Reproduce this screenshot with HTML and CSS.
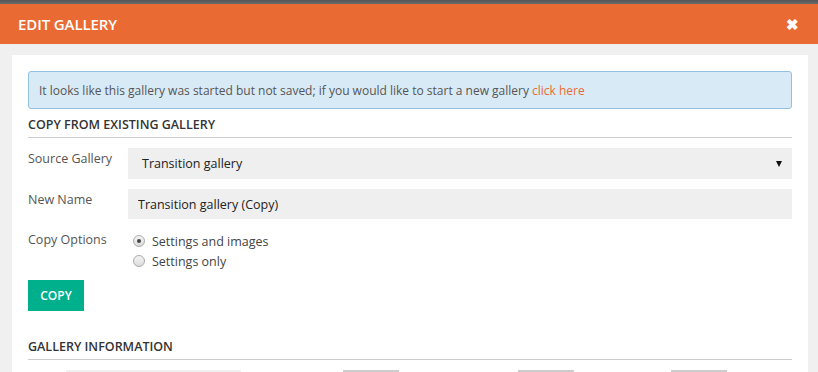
FILE: index.html
```html
<!DOCTYPE html>
<html>
<head>
    <title>Edit Gallery</title>
    <link rel="stylesheet" href="styles.css">
</head>
<body>
    <div class="top-strip"></div>
    <div class="modal-header">
        <h1 class="modal-title">EDIT GALLERY</h1>
        <span class="modal-close">&#10006;</span>
    </div>
    <div class="modal-body">
        <div class="panel">
            <div class="alert">
                It looks like this gallery was started but not saved; if you would like to start a new gallery <a href="#">click here</a>
            </div>

            <h2 class="section-title">COPY FROM EXISTING GALLERY</h2>

            <div class="form-row">
                <label class="form-label">Source Gallery</label>
                <div class="select-box">
                    <span>Transition gallery</span>
                    <span class="select-arrow"></span>
                </div>
            </div>
            <div class="form-row">
                <label class="form-label">New Name</label>
                <input class="text-input" type="text" value="Transition gallery (Copy)">
            </div>
            <div class="form-row">
                <label class="form-label">Copy Options</label>
                <div class="radio-list">
                    <label class="radio"><span class="radio-dot checked"></span>Settings and images</label>
                    <label class="radio"><span class="radio-dot"></span>Settings only</label>
                </div>
            </div>

            <button class="copy-button">COPY</button>

            <h2 class="section-title">GALLERY INFORMATION</h2>

            <div class="info-row">
                <div class="info-block wide"></div>
                <div class="info-block"></div>
                <div class="info-block"></div>
                <div class="info-block"></div>
            </div>
        </div>
    </div>
</body>
</html>
```

FILE: styles.css
```css
body {
    font-family: "Open Sans", Arial, sans-serif;
    margin: 0;
    height: 372px;
    overflow: hidden;
    background-color: #f0f0f0;
    color: #444;
}

.top-strip {
    height: 4px;
    background: linear-gradient(to bottom, #555, #6a6a6a);
}

.modal-header {
    height: 40px;
    background-color: #e96a33;
    display: flex;
    align-items: center;
    justify-content: space-between;
    padding: 0 19px 0 18px;
}

.modal-title {
    margin: 0;
    color: white;
    font-size: 15px;
    font-weight: 600;
    letter-spacing: -0.1px;
}

.modal-close {
    color: white;
    font-size: 15px;
    font-weight: bold;
}

.modal-body {
    padding: 11px 10px 0 12px;
}

.panel {
    background-color: white;
    padding: 16px 16px 40px 16px;
}

.alert {
    background-color: #d9eaf7;
    border: 1px solid #93c2e0;
    border-radius: 3px;
    box-sizing: border-box;
    height: 38px;
    padding: 0 10px;
    display: flex;
    align-items: center;
    font-size: 12px;
    color: #555;
}

.alert a {
    color: #e96a33;
    text-decoration: none;
    margin-left: 3px;
}

.section-title {
    margin: 0;
    font-size: 12.5px;
    font-weight: 600;
    color: #333;
    border-bottom: 1px solid #ccc;
    padding: 7px 0 4px 0;
}

.form-row {
    display: flex;
    margin-top: 10px;
}

.form-label {
    width: 100px;
    flex-shrink: 0;
    font-size: 12.5px;
    color: #555;
    padding-top: 2px;
}

.select-box {
    flex: 1;
    height: 31px;
    background-color: #efefef;
    display: flex;
    align-items: center;
    justify-content: space-between;
    padding: 0 10px 0 14px;
    font-size: 12.5px;
    color: #222;
}

.select-arrow {
    width: 0;
    height: 0;
    border-left: 3px solid transparent;
    border-right: 3px solid transparent;
    border-top: 6px solid #111;
}

.text-input {
    flex: 1;
    height: 30px;
    box-sizing: border-box;
    border: none;
    background-color: #efefef;
    padding: 0 10px;
    font-family: inherit;
    font-size: 12.5px;
    color: #222;
}

.radio-list {
    display: flex;
    flex-direction: column;
    padding-left: 5px;
    padding-top: 2px;
}

.radio {
    display: flex;
    align-items: center;
    font-size: 12.5px;
    color: #444;
    height: 20px;
}

.radio-dot {
    width: 10px;
    height: 10px;
    border-radius: 50%;
    border: 1px solid #aaa;
    background: linear-gradient(to bottom, #f4f4f4, #dcdcdc);
    margin-right: 7px;
    position: relative;
}

.radio-dot.checked::after {
    content: "";
    position: absolute;
    left: 3px;
    top: 3px;
    width: 4px;
    height: 4px;
    border-radius: 50%;
    background-color: #444;
}

.copy-button {
    display: block;
    margin-top: 9px;
    width: 56px;
    height: 31px;
    border: none;
    background-color: #00b08c;
    color: white;
    font-family: inherit;
    font-size: 12px;
    font-weight: 600;
    cursor: pointer;
}

.copy-button + .section-title {
    margin-top: 20px;
}

.info-row {
    display: flex;
    margin-top: 10px;
    padding-left: 38px;
}

.info-block {
    width: 56px;
    height: 20px;
    background-color: #ccc;
}

.info-block.wide {
    width: 175px;
    background-color: #f0f0f0;
    margin-right: 102px;
}

.info-block:nth-child(3) {
    margin-left: 119px;
}

.info-block:nth-child(4) {
    margin-left: 97px;
}
```
